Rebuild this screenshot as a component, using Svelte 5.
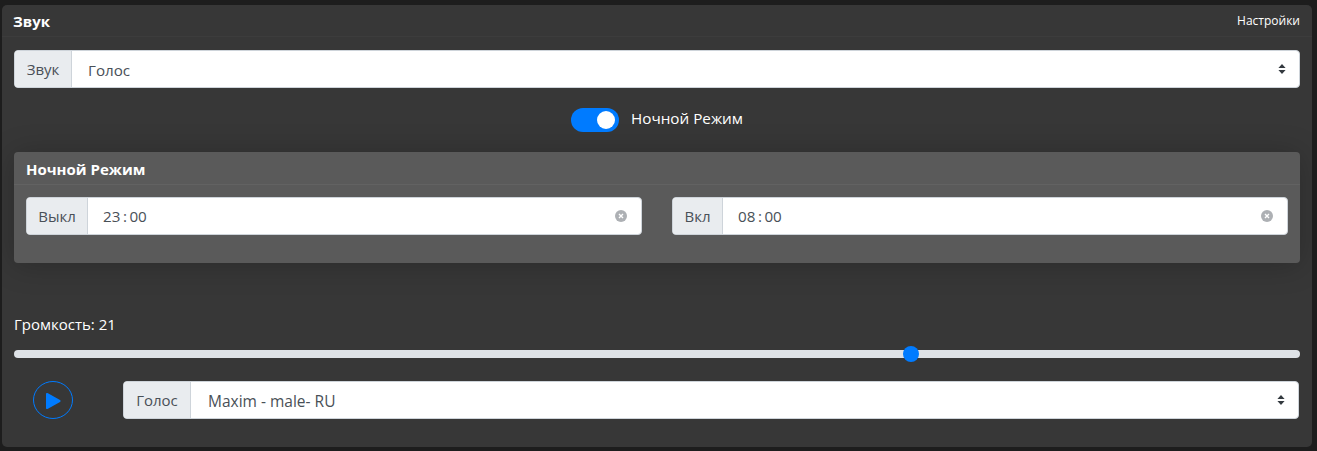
<script>
  let sound = 'Голос';
  let nightMode = true;
  let off = '23:00';
  let on = '08:00';
  let volume = 21;
  let voice = 'Maxim - male- RU';

  const spaced = (t) => t.replace(':', '\u2009:\u2009');
</script>

<div class="page">
  <div class="card">
    <div class="card-header">
      <strong>Звук</strong>
      <span class="settings">Настройки</span>
    </div>

    <div class="card-body">
      <div class="input-group">
        <span class="addon addon-sound">Звук</span>
        <div class="select">
          <span class="value">{sound}</span>
          <svg class="updown" viewBox="0 0 8 12" width="8" height="12"><path d="M4 1 7.600 5H.4zM4 11 .4 7h7.200z" /></svg>
        </div>
      </div>

      <div class="switch-row">
        <span class="switch" class:on={nightMode}><span class="knob"></span></span>
        <span class="switch-label">Ночной Режим</span>
      </div>

      <div class="panel">
        <div class="panel-header">Ночной Режим</div>
        <div class="panel-body">
          <div class="input-group">
            <span class="addon addon-off">Выкл</span>
            <div class="time">
              <span class="value">{spaced(off)}</span>
              <svg class="clear" viewBox="0 0 12 12" width="12" height="12">
                <circle cx="6" cy="6" r="6" fill="#adb0b4" />
                <path d="M4 4l4 4M8 4l-4 4" stroke="#fff" stroke-width="1.400" />
              </svg>
            </div>
          </div>
          <div class="input-group">
            <span class="addon addon-on">Вкл</span>
            <div class="time">
              <span class="value">{spaced(on)}</span>
              <svg class="clear" viewBox="0 0 12 12" width="12" height="12">
                <circle cx="6" cy="6" r="6" fill="#adb0b4" />
                <path d="M4 4l4 4M8 4l-4 4" stroke="#fff" stroke-width="1.400" />
              </svg>
            </div>
          </div>
        </div>
      </div>

      <div class="volume-label">Громкость: {volume}</div>
      <div class="range"><span class="thumb"></span></div>

      <div class="voice-row">
        <div class="play-cell">
          <svg viewBox="0 0 40 38" width="40" height="38">
            <ellipse cx="20" cy="19" rx="19.500" ry="18.500" fill="none" stroke="#007bff" />
            <path d="M13 13c0-1 .7-1.300 1.500-.9l12.500 7c.8.4.8 1.400 0 1.800l-12.500 7c-.8.4-1.500 0-1.500-.9z" fill="#007bff" />
          </svg>
        </div>
        <div class="input-group">
          <span class="addon addon-voice">Голос</span>
          <div class="select">
            <span class="value latin">{voice}</span>
            <svg class="updown" viewBox="0 0 8 12" width="8" height="12"><path d="M4 1 7.600 5H.4zM4 11 .4 7h7.200z" /></svg>
          </div>
        </div>
      </div>
    </div>
  </div>
</div>

<style>
  :global(body) {
    margin: 0;
    background: #1d1d1d;
  }
  .page {
    height: 451px;
    box-sizing: border-box;
    padding: 5px 5px 4px 2px;
    font-family: "Open Sans", "Noto Sans", sans-serif;
    font-size: 15px;
    color: #fff;
  }
  .card {
    height: 442px;
    background: #373737;
    border-radius: 5px;
    overflow: hidden;
  }
  .card-header {
    height: 32px;
    box-sizing: border-box;
    padding: 0 12px 0 11px;
    display: flex;
    justify-content: space-between;
    align-items: center;
    border-bottom: 1px solid #3c3c3c;
  }
  .card-header strong {
    font-size: 15px;
    font-weight: 700;
  }
  .settings {
    font-size: 12px;
  }
  .card-body {
    padding: 13px 12px 0;
  }
  .input-group {
    display: flex;
    height: 38px;
    flex: 1;
    box-sizing: border-box;
    color: #495057;
    border: 1px solid #ced4da;
    border-radius: 4px;
    background: #fff;
    overflow: hidden;
  }
  .addon {
    display: flex;
    align-items: center;
    justify-content: center;
    box-sizing: border-box;
    background: #e9ecef;
    border-right: 1px solid #ced4da;
  }
  .addon-sound { width: 57px; }
  .addon-off { width: 61px; }
  .addon-on { width: 50px; }
  .addon-voice { width: 67px; }
  .select, .time {
    flex: 1;
    display: flex;
    align-items: center;
    justify-content: space-between;
  }
  .select { padding: 0 13px 0 16px; }
  .time { padding: 0 14px 0 15px; }
  .value {
    font-size: 15.200px;
  }
  .select .value {
    padding-top: 2px;
  }
  .value.latin {
    font-size: 15.500px;
    padding-left: 1px;
  }
  .updown {
    fill: #343a40;
  }
  .switch-row {
    display: flex;
    align-items: center;
    justify-content: center;
    gap: 12px;
    height: 24px;
    margin-top: 20px;
  }
  .switch-label {
    font-size: 15.250px;
    margin-bottom: 5px;
  }
  .switch {
    width: 48px;
    height: 24px;
    border-radius: 12px;
    background: #555;
    position: relative;
  }
  .switch.on {
    background: #007bff;
  }
  .knob {
    position: absolute;
    top: 3px;
    right: 4px;
    width: 18px;
    height: 18px;
    border-radius: 50%;
    background: #fff;
  }
  .panel {
    height: 111px;
    margin-top: 20px;
    background: #5a5a5a;
    border-radius: 4px;
    box-shadow: 0 2px 30px rgba(0, 0, 0, 0.22);
  }
  .panel-header {
    height: 33px;
    box-sizing: border-box;
    padding: 1px 12px 0;
    display: flex;
    align-items: center;
    font-weight: 700;
    border-bottom: 1px solid #626262;
  }
  .panel-body {
    display: flex;
    gap: 30px;
    padding: 12px;
  }
  .volume-label {
    margin-top: 50px;
    height: 22px;
    line-height: 22px;
  }
  .range {
    position: relative;
    height: 8px;
    margin-top: 15px;
    background: #dee2e6;
    border-radius: 4px;
  }
  .thumb {
    position: absolute;
    left: 889px;
    top: -4px;
    width: 16px;
    height: 16px;
    border-radius: 50%;
    background: #007bff;
  }
  .voice-row {
    display: flex;
    margin-top: 23px;
    padding-right: 1px;
  }
  .play-cell {
    width: 109px;
    display: flex;
    padding-left: 19px;
    box-sizing: border-box;
  }
</style>
